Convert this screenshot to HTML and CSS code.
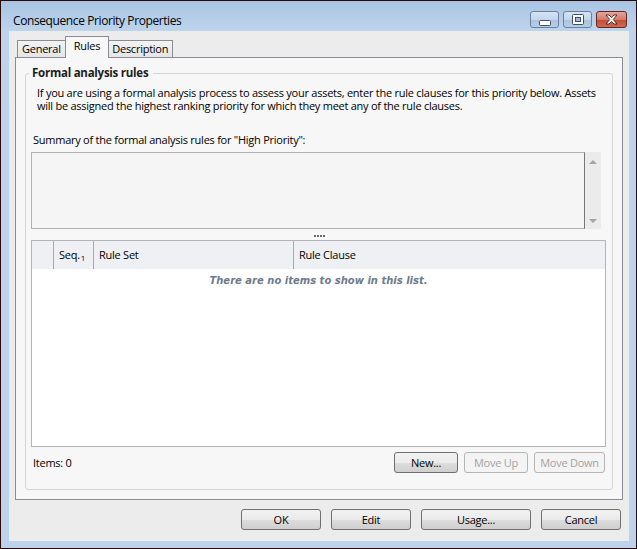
FILE: index.html
```html
<!DOCTYPE html>
<html lang="en">
<head>
  <meta charset="UTF-8">
  <title>Consequence Priority Properties</title>
  <link rel="stylesheet" href="styles.css">
</head>
<body>
  <div class="window">
    <div class="titlebar">
      <span class="title">Consequence Priority Properties</span>
      <div class="caption-buttons">
        <span class="cap cap-min">
          <svg width="12" height="6" viewBox="0 0 12 6"><rect x="0.5" y="0.5" width="11" height="5" rx="1" fill="#fff" stroke="#3f4f66"/></svg>
        </span>
        <span class="cap cap-max">
          <svg width="12" height="11" viewBox="0 0 12 11"><rect x="0.5" y="0.5" width="11" height="10" rx="1" fill="#fff" stroke="#3f4f66"/><rect x="3.5" y="3.5" width="5" height="4" fill="#9fb5d2" stroke="#3f4f66"/></svg>
        </span>
        <span class="cap cap-close">
          <svg width="13" height="11" viewBox="0 0 13 11"><path d="M1 1h3l2.5 2.6L9 1h3L8.2 5.5 12 10H9L6.5 7.4 4 10H1l3.8-4.5z" fill="#fff" stroke="#4a1c1c" stroke-width="0.9" stroke-linejoin="round"/></svg>
        </span>
      </div>
    </div>

    <div class="client">
      <div class="tabs">
        <span class="tab">General</span>
        <span class="tab active">Rules</span>
        <span class="tab">Description</span>
      </div>

      <div class="tab-panel">
        <fieldset class="group">
          <legend>Formal analysis rules</legend>
          <div class="intro">
            <div class="intro-line">If you are using a formal analysis process to assess your assets, enter the rule clauses for this priority below. Assets</div>
            <div class="intro-line">will be assigned the highest ranking priority for which they meet any of the rule clauses.</div>
          </div>

          <div class="summary-label">Summary of the formal analysis rules for "High Priority":</div>
          <div class="summary">
            <div class="summary-text"></div>
            <div class="vscroll">
              <span class="arrow arrow-up"></span>
              <span class="arrow arrow-down"></span>
            </div>
          </div>

          <div class="splitter"><span class="dots"></span></div>

          <div class="list">
            <div class="list-header">
              <div class="col col-icon"></div>
              <div class="col col-seq">Seq.<span class="sort">1</span></div>
              <div class="col col-set">Rule Set</div>
              <div class="col col-clause">Rule Clause</div>
            </div>
            <div class="list-body">
              <p class="empty">There are no items to show in this list.</p>
            </div>
          </div>

          <div class="list-footer">
            <span class="count">Items: 0</span>
            <div class="list-buttons">
              <button class="btn btn-new">New...</button>
              <button class="btn btn-up" disabled>Move Up</button>
              <button class="btn btn-down" disabled>Move Down</button>
            </div>
          </div>
        </fieldset>
      </div>

      <div class="dialog-buttons">
        <button class="btn btn-dialog">OK</button>
        <button class="btn btn-dialog">Edit</button>
        <button class="btn btn-dialog btn-wide">Usage...</button>
        <button class="btn btn-dialog">Cancel</button>
      </div>
    </div>
  </div>
</body>
</html>
```

FILE: styles.css
```css
body {
  margin: 0;
  font-family: "Open Sans", "Noto Sans", sans-serif;
  font-size: 11px;
  letter-spacing: -0.25px;
  color: #000;
  background: #fff;
}

.window {
  width: 637px;
  height: 549px;
  box-sizing: border-box;
  border: 1px solid #2d0b0b;
  padding: 0 7px 7px 8px;
  display: flex;
  flex-direction: column;
  background: linear-gradient(to bottom, #a9c4e3 0, #bdd4ec 30px, #bcd3eb 100%);
}

/* title bar */
.titlebar {
  height: 30px;
  display: flex;
  align-items: flex-start;
  justify-content: space-between;
}

.title {
  margin: 12px 0 0 4px;
  font-size: 12px;
  letter-spacing: -0.4px;
  line-height: 16px;
}

.caption-buttons {
  display: flex;
  gap: 4px;
  margin: 10px 2px 0 0;
}

.cap {
  width: 27px;
  height: 15px;
  border: 1px solid #6a809f;
  border-radius: 3px;
  display: flex;
  align-items: center;
  justify-content: center;
  background: linear-gradient(to bottom, #d6e4f3 0, #c3d6ec 50%, #a9c2e0 51%, #b7cde7 100%);
}

.cap-min svg {
  margin-top: 6px;
}

.cap-close {
  width: 29px;
  border-color: #6b2424;
  background: linear-gradient(to bottom, #e3a59a 0, #d37b6b 50%, #c14a35 51%, #cf6a52 100%);
}

/* client area */
.client {
  flex: 1;
  background: #ececec;
  padding: 6px 6px 10px 6px;
  display: flex;
  flex-direction: column;
}

.tabs {
  display: flex;
  align-items: flex-end;
  height: 20px;
  margin-left: 2px;
}

.tab {
  height: 16px;
  line-height: 15px;
  padding: 0 4px;
  border: 1px solid #898c95;
  border-bottom: none;
  background: linear-gradient(to bottom, #f3f3f3, #e5e5e5);
}

.tab + .tab {
  border-left: none;
}

.tab.active {
  position: relative;
  z-index: 1;
  height: 21px;
  line-height: 17px;
  margin: 0 -1px -1px -1px;
  padding: 0 8px;
  border-left: 1px solid #898c95;
  background: #f7f7f7;
}

.tab.active + .tab {
  border-left: none;
}

.tab-panel {
  height: 443px;
  box-sizing: border-box;
  border: 1px solid #898c95;
  background: #f7f7f7;
  padding: 8px 9px 9px 9px;
  display: flex;
}

/* group box */
.group {
  flex: 1;
  margin: 0;
  min-width: 0;
  border: 1px solid #d5d5d5;
  border-radius: 3px;
  padding: 0 6px 14px 5px;
  display: flex;
  flex-direction: column;
}

.group legend {
  margin-left: -2px;
  padding: 0 5px 0 3px;
  font-weight: bold;
  font-size: 11.5px;
  line-height: 14px;
  color: #1e1e1e;
}

.intro {
  margin: 6px 0 0 6px;
  white-space: nowrap;
}

.intro-line {
  height: 13px;
  line-height: 13px;
}

.summary-label {
  margin: 21px 0 0 2px;
  line-height: 13px;
}

.summary {
  display: flex;
  width: 570px;
  height: 77px;
  margin-top: 6px;
}

.summary-text {
  flex: 1;
  border: 1px solid #b1b1b1;
  border-right-color: #777;
  background: #f5f5f5;
}

.vscroll {
  width: 16px;
  background: #ebebeb;
  display: flex;
  flex-direction: column;
  justify-content: space-between;
  align-items: center;
  padding: 8px 0 6px;
}

.arrow {
  width: 0;
  height: 0;
  border-left: 4px solid transparent;
  border-right: 4px solid transparent;
}

.arrow-up {
  border-bottom: 4px solid #a4a4a4;
}

.arrow-down {
  border-top: 4px solid #a4a4a4;
}

.splitter {
  height: 11px;
  display: flex;
  justify-content: center;
  align-items: flex-end;
}

.dots {
  width: 12px;
  height: 2px;
  margin: 0 0 3px 3px;
  background: repeating-linear-gradient(to right, #6a6a6a 0 2px, transparent 2px 3px);
}

/* list view */
.list {
  height: 207px;
  box-sizing: border-box;
  border: 1px solid #b4b4b4;
  background: #fff;
  display: flex;
  flex-direction: column;
}

.list-header {
  display: flex;
  height: 28px;
  background: #eef0f4;
}

.col {
  box-sizing: border-box;
  line-height: 28px;
  padding-left: 5px;
  border-right: 1px solid #a9a9a9;
}

.col-icon {
  width: 22px;
}

.col-seq {
  width: 40px;
}

.col-set {
  width: 200px;
}

.col-clause {
  flex: 1;
  border-right: none;
}

.sort {
  font-size: 8px;
  margin-left: 1px;
  position: relative;
  top: 2px;
}

.empty {
  margin: 5px 0 0;
  text-align: center;
  font-family: "DejaVu Sans", sans-serif;
  font-size: 10px;
  letter-spacing: 0;
  font-weight: bold;
  font-style: italic;
  line-height: 13px;
  color: #6d7b8c;
}

.list-footer {
  display: flex;
  justify-content: space-between;
  align-items: center;
  margin-top: 5px;
}

.count {
  margin-left: 2px;
}

.list-buttons {
  display: flex;
  gap: 6px;
  margin-right: 1px;
}

/* buttons */
.btn {
  height: 21px;
  padding: 0;
  font-family: inherit;
  font-size: 11px;
  letter-spacing: inherit;
  color: #000;
  border: 1px solid #707070;
  border-radius: 3px;
  background: linear-gradient(to bottom, #f2f2f2 0, #ebebeb 50%, #dddddd 51%, #cfcfcf 100%);
}

.btn:disabled {
  color: #a3a3a3;
  border-color: #b5b5b5;
  background: #f4f4f4;
}

.btn-new,
.btn-up {
  width: 64px;
}

.btn-down {
  width: 71px;
}

.dialog-buttons {
  display: flex;
  justify-content: flex-end;
  gap: 10px;
  margin-top: 9px;
  padding-right: 2px;
}

.btn-dialog {
  width: 80px;
}

.btn-wide {
  width: 110px;
}
```
